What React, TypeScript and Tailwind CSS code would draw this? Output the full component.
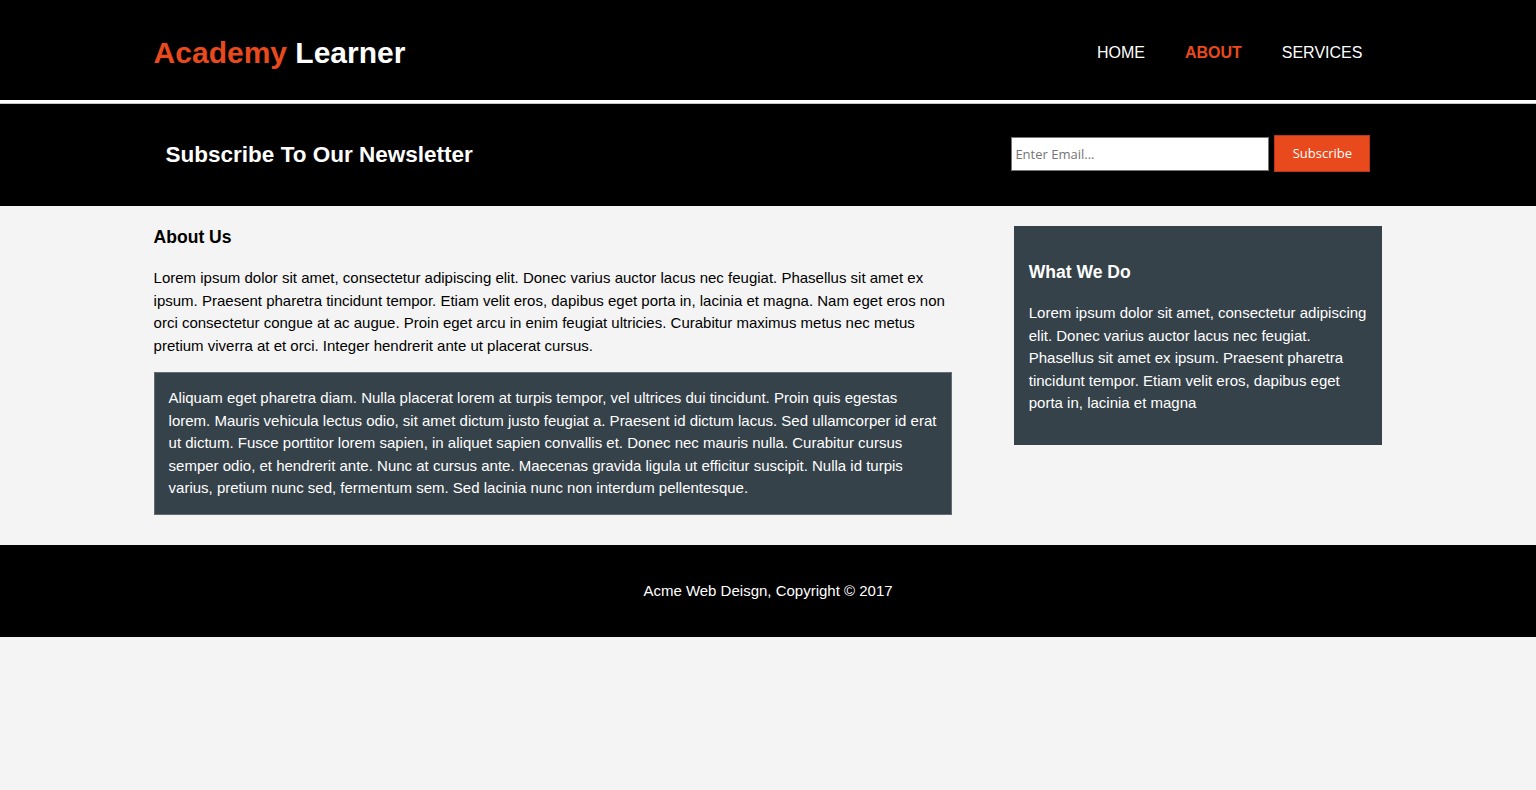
import React from 'react'

const navLinks = [
  { label: 'Home', active: false },
  { label: 'About', active: true },
  { label: 'Services', active: false },
]

const App = () => {
  return (
    <div className="min-h-screen bg-[#f4f4f4] font-['Liberation_Sans',Arial,sans-serif] text-[15px] leading-[1.5] text-black">
      <header className="bg-black h-[100px] pt-[30px]">
        <div className="w-4/5 mx-auto flex justify-between items-start">
          <h1 className="text-[30px] font-bold leading-[1.5]">
            <span className="text-[#e8491d]">Academy</span>{' '}
            <span className="text-white">Learner</span>
          </h1>
          <ul className="flex mt-[11px]">
            {navLinks.map((link) => (
              <li key={link.label} className="px-5 text-[16px] uppercase">
                <a
                  href="#"
                  className={
                    link.active
                      ? 'text-[#e8491d] font-bold'
                      : 'text-white'
                  }
                >
                  {link.label}
                </a>
              </li>
            ))}
          </ul>
        </div>
      </header>
      <div className="h-[3px] bg-white" />
      <div className="h-px bg-[#c8c8c8]" />

      <section className="bg-black h-[102px]">
        <div className="w-4/5 h-full mx-auto px-3 flex justify-between">
          <h1 className="self-center text-[22.5px] font-bold text-white leading-[1.5]">
            Subscribe To Our Newsletter
          </h1>
          <form className="self-start mt-[31px] flex items-start">
            <input
              type="email"
              placeholder="Enter Email..."
              className="w-[258px] h-[34px] mt-[2px] bg-white border border-[#767676] px-[3px] text-[13px] font-['Open_Sans',sans-serif] placeholder:text-[#757575] outline-none"
            />
            <button
              type="button"
              className="ml-[5px] w-[96px] h-[37px] bg-[#e8491d] border border-[#b5391a] text-white text-[13px] font-['Open_Sans',sans-serif]"
            >
              Subscribe
            </button>
          </form>
        </div>
      </section>

      <section className="w-4/5 mx-auto flex justify-between items-start">
        <article className="w-[65%]">
          <h1 className="text-[17.55px] font-bold leading-[1.5] mt-[17.55px] mb-[17.55px]">
            About Us
          </h1>
          <p className="mb-[15px]">
            Lorem ipsum dolor sit amet, consectetur adipiscing elit. Donec varius
            auctor lacus nec feugiat. Phasellus sit amet ex ipsum. Praesent
            pharetra tincidunt tempor. Etiam velit eros, dapibus eget porta in,
            lacinia et magna. Nam eget eros non orci consectetur congue at ac
            augue. Proin eget arcu in enim feugiat ultricies. Curabitur maximus
            metus nec metus pretium viverra at et orci. Integer hendrerit ante ut
            placerat cursus.
          </p>
          <p className="bg-[#36424a] text-white border border-[#646d73] p-[14px] mb-[10px]">
            Aliquam eget pharetra diam. Nulla placerat lorem at turpis tempor, vel
            ultrices dui tincidunt. Proin quis egestas lorem. Mauris vehicula
            lectus odio, sit amet dictum justo feugiat a. Praesent id dictum
            lacus. Sed ullamcorper id erat ut dictum. Fusce porttitor lorem
            sapien, in aliquet sapien convallis et. Donec nec mauris nulla.
            Curabitur cursus semper odio, et hendrerit ante. Nunc at cursus ante.
            Maecenas gravida ligula ut efficitur suscipit. Nulla id turpis varius,
            pretium nunc sed, fermentum sem. Sed lacinia nunc non interdum
            pellentesque.
          </p>
        </article>
        <aside className="w-[30%] mt-[20px]">
          <div className="bg-[#36424a] text-white p-[15px]">
            <h3 className="text-[17.55px] font-bold leading-[1.5] mt-[17.55px] mb-[17.55px]">
              What We Do
            </h3>
            <p className="mb-[15px]">
              Lorem ipsum dolor sit amet, consectetur adipiscing elit. Donec
              varius auctor lacus nec feugiat. Phasellus sit amet ex ipsum.
              Praesent pharetra tincidunt tempor. Etiam velit eros, dapibus eget
              porta in, lacinia et magna
            </p>
          </div>
        </aside>
      </section>

      <footer className="bg-black text-white text-center p-5 mt-5">
        <p className="my-[15px]">Acme Web Deisgn, Copyright © 2017</p>
      </footer>
    </div>
  )
}

export default App
